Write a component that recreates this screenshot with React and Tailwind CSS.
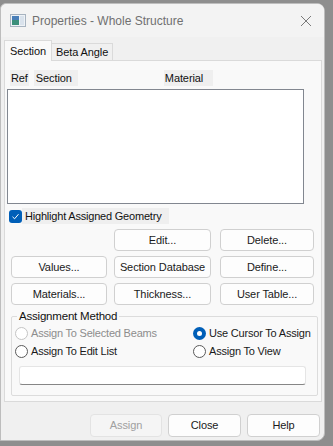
import React from 'react';

const font = { fontFamily: "'Liberation Sans', Arial, sans-serif" };

const Btn = ({ children, className = '', disabled = false }) => (
    <button
        className={`h-[22px] rounded-[4px] border text-[11px] tracking-[-0.1px] leading-none ${
            disabled
                ? 'border-[#e3e3e3] bg-[#f5f5f5] text-[#a0a0a0]'
                : 'border-[#d0d0d0] bg-[#fdfdfd] text-[#1a1a1a]'
        } ${className}`}
    >
        {children}
    </button>
);

const Radio = ({ label, checked = false, disabled = false }) => (
    <div className="flex items-center gap-[3px] h-[18px] whitespace-nowrap">
        {checked ? (
            <span className="w-[13px] h-[13px] rounded-full bg-[#005fb8] flex items-center justify-center">
                <span className="w-[5px] h-[5px] rounded-full bg-white" />
            </span>
        ) : (
            <span
                className={`w-[13px] h-[13px] rounded-full border bg-white ${
                    disabled ? 'border-[#c4c4c4]' : 'border-[#5a5a5a]'
                }`}
            />
        )}
        <span className={`text-[11px] tracking-[-0.2px] ${disabled ? 'text-[#8d8d8d]' : 'text-[#1a1a1a]'}`}>{label}</span>
    </div>
);

export default function App() {
    return (
        <div className="w-[333px] h-[446px] bg-[#8e8e8e] overflow-hidden" style={font}>
            <div className="mt-[3px] w-[325px] h-[438px] bg-[#f0f0f0] rounded-r-[8px] rounded-tl-[6px] border border-[#bdbdbd] flex flex-col">
                {/* Title bar */}
                <div className="h-[33px] flex items-center pl-[9px] pr-[12px] bg-[#f3f3f3] rounded-t-[6px]">
                    <svg width="16" height="13" viewBox="0 0 16 13" className="mr-[6px]">
                        <rect x="0.5" y="0.5" width="15" height="12" fill="#eef2f6" stroke="#a7b3c0" />
                        <rect x="2" y="2" width="7" height="9" fill="#3b8f7a" />
                        <rect x="2" y="2" width="7" height="4" fill="#4a7fb8" />
                        <rect x="10" y="2" width="4" height="9" fill="#d9e2ec" />
                    </svg>
                    <span className="text-[12px] text-[#707070]">Properties - Whole Structure</span>
                    <svg width="12" height="12" viewBox="0 0 12 12" className="ml-auto">
                        <path d="M1 1 L11 11 M11 1 L1 11" stroke="#7a7a7a" strokeWidth="1" />
                    </svg>
                </div>

                <div className="px-[3px] mt-[2px]">
                    {/* Tabs */}
                    <div className="flex items-end h-[21px]">
                        <div className="h-[21px] px-[5px] flex items-center bg-[#f9f9f9] border border-b-0 border-[#dadada] text-[11px] tracking-[-0.1px] text-[#111] relative top-[1px]">
                            Section
                        </div>
                        <div className="h-[17px] px-[4px] flex items-center bg-[#f0f0f0] border border-l-0 border-b-0 border-[#dadada] text-[11px] tracking-[-0.1px] text-[#111]">
                            Beta Angle
                        </div>
                    </div>

                    {/* Panel */}
                    <div className="w-[318px] h-[342px] bg-[#f9f9f9] border border-[#dadada] pt-[9px]">
                        <div className="flex items-center h-[16px] text-[11px] tracking-[-0.1px] text-[#111]">
                            <span className="ml-[5px] px-[1px] bg-[#efefef]">Ref</span>
                            <span className="ml-[5px] w-[44px] pl-[2px] bg-[#efefef]">Section</span>
                            <span className="ml-[86px] w-[49px] pl-[1px] bg-[#efefef]">Material</span>
                        </div>
                        <div className="ml-[2px] mt-[3px] w-[297px] h-[115px] bg-white border border-[#828790]" />

                        <div className="ml-[4px] mt-[4px] flex items-center h-[16px]">
                            <span className="w-[13px] h-[13px] rounded-[3px] bg-[#005fb8] flex items-center justify-center">
                                <svg width="9" height="9" viewBox="0 0 9 9">
                                    <path d="M1.5 4.8 L3.6 6.8 L7.5 2.2" fill="none" stroke="white" strokeWidth="1" />
                                </svg>
                            </span>
                            <span className="text-[11px] tracking-[-0.2px] text-[#111] pl-[3px] pr-[8px] bg-[#efefef]">Highlight Assigned Geometry</span>
                        </div>

                        <div className="ml-[6px] mt-[5px] grid grid-cols-[96px_97px_96px] gap-x-[7px] gap-y-[5px]">
                            <div />
                            <Btn>Edit...</Btn>
                            <Btn className="ml-[2px]">Delete...</Btn>
                            <Btn>Values...</Btn>
                            <Btn>Section Database</Btn>
                            <Btn className="ml-[2px]">Define...</Btn>
                            <Btn>Materials...</Btn>
                            <Btn>Thickness...</Btn>
                            <Btn className="ml-[2px]">User Table...</Btn>
                        </div>

                        {/* Assignment method group */}
                        <div className="relative ml-[6px] mt-[11px] w-[307px] h-[80px] border border-[#dcdcdc] rounded-[2px] px-[3px] pt-[7px]">
                            <span className="absolute -top-[9px] left-[5px] px-[2px] bg-[#f9f9f9] text-[11.5px] tracking-[-0.2px] text-[#111]">
                                Assignment Method
                            </span>
                            <div className="grid grid-cols-[178px_1fr]">
                                <Radio label="Assign To Selected Beams" disabled />
                                <Radio label="Use Cursor To Assign" checked />
                                <Radio label="Assign To Edit List" />
                                <Radio label="Assign To View" />
                            </div>
                            <div className="ml-[4px] mt-[6px] w-[287px] h-[19px] bg-white border border-[#e5e5e5] border-b-[#868686] rounded-[3px]" />
                        </div>
                    </div>
                </div>

                {/* Bottom buttons */}
                <div className="mt-[12px] flex justify-end gap-[6px] pr-[4px]">
                    <Btn disabled className="w-[72px] h-[23px]">Assign</Btn>
                    <Btn className="w-[73px] h-[23px]">Close</Btn>
                    <Btn className="w-[73px] h-[23px]">Help</Btn>
                </div>
            </div>
        </div>
    );
}
